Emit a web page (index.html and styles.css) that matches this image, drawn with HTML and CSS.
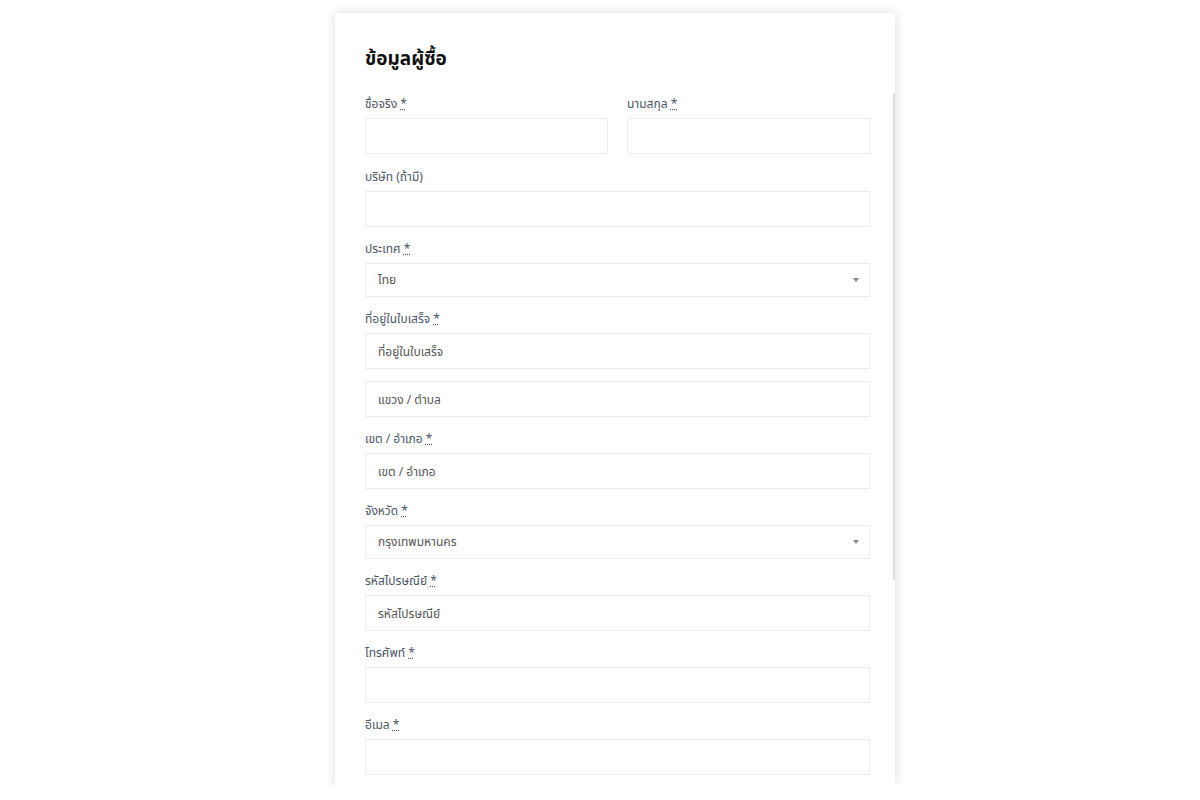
FILE: index.html
```html
<!DOCTYPE html>
<html lang="th">
<head>
  <meta charset="UTF-8">
  <meta name="viewport" content="width=device-width, initial-scale=1.0">
  <title>ข้อมูลผู้ซื้อ</title>
  <link rel="stylesheet" href="styles.css">
</head>
<body>

  <div class="checkout">
    <h2>ข้อมูลผู้ซื้อ</h2>

    <div class="row-2">
      <div class="field">
        <label>ชื่อจริง <abbr title="required">*</abbr></label>
        <input type="text">
      </div>
      <div class="field">
        <label>นามสกุล <abbr title="required">*</abbr></label>
        <input type="text">
      </div>
    </div>

    <div class="field">
      <label>บริษัท (ถ้ามี)</label>
      <input type="text">
    </div>

    <div class="field">
      <label>ประเทศ <abbr title="required">*</abbr></label>
      <div class="select">ไทย</div>
    </div>

    <div class="field">
      <label>ที่อยู่ในใบเสร็จ <abbr title="required">*</abbr></label>
      <input type="text" placeholder="ที่อยู่ในใบเสร็จ">
    </div>

    <div class="field">
      <input type="text" placeholder="แขวง / ตำบล">
    </div>

    <div class="field">
      <label>เขต / อำเภอ <abbr title="required">*</abbr></label>
      <input type="text" placeholder="เขต / อำเภอ">
    </div>

    <div class="field">
      <label>จังหวัด <abbr title="required">*</abbr></label>
      <div class="select">กรุงเทพมหานคร</div>
    </div>

    <div class="field">
      <label>รหัสไปรษณีย์ <abbr title="required">*</abbr></label>
      <input type="text" placeholder="รหัสไปรษณีย์">
    </div>

    <div class="field">
      <label>โทรศัพท์ <abbr title="required">*</abbr></label>
      <input type="text">
    </div>

    <div class="field">
      <label>อีเมล <abbr title="required">*</abbr></label>
      <input type="text">
    </div>
  </div>

</body>
</html>
```

FILE: styles.css
```css
/* Estilos gerais */
body {
  font-family: "Noto Sans", "Noto Sans Thai", "DejaVu Sans", sans-serif;
  background-color: #fff;
  margin: 0;
  padding: 13px 0 0 30px;
  color: #555;
}

/* Caixa do formulário */
.checkout {
  position: relative;
  width: 560px;
  margin: 0 auto;
  padding: 28px 25px 10px 30px;
  box-sizing: border-box;
  background-color: #fff;
  box-shadow: 0 0 10px rgba(0, 0, 0, 0.15);
}

/* barra de rolagem interna */
.checkout::after {
  content: "";
  position: absolute;
  right: 0;
  top: 80px;
  width: 2px;
  height: 487px;
  background-color: #ddd;
}

.checkout h2 {
  margin: 0 0 19px;
  font-size: 19px;
  line-height: 34px;
  font-weight: bold;
  color: #111;
}

.row-2 {
  display: grid;
  grid-template-columns: 1fr 1fr;
  column-gap: 19px;
  margin-bottom: 13px;
}

.row-2 .field {
  margin-bottom: 0;
}

.field {
  margin-bottom: 12px;
}

.field:last-child {
  margin-bottom: 0;
}

.field label {
  display: block;
  font-size: 12px;
  line-height: 20px;
  margin-bottom: 4px;
  color: #4c5566;
}

.field abbr {
  color: #4c5566;
  text-decoration: underline dotted;
}

.field input,
.select {
  display: block;
  width: 100%;
  height: 36px;
  padding: 0 12px;
  box-sizing: border-box;
  border: 1px solid #ebebeb;
  font-family: inherit;
  font-size: 12px;
  color: #555;
  background-color: #fff;
  outline: none;
}

.field input::placeholder {
  color: #555;
}

.select {
  position: relative;
  height: 34px;
  line-height: 32px;
}

.select::after {
  content: "";
  position: absolute;
  right: 10px;
  top: 14px;
  border-left: 3px solid transparent;
  border-right: 3px solid transparent;
  border-top: 4px solid #888;
}
```
